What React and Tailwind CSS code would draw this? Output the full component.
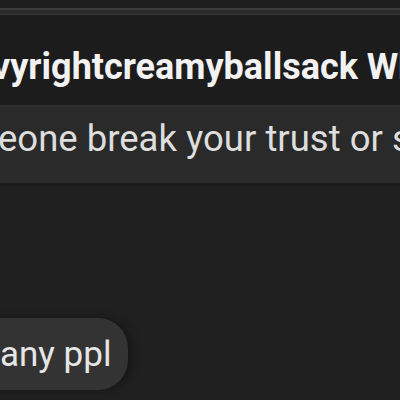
export default function App() {
  return (
    <div className="w-[400px] h-[400px] overflow-hidden bg-[#202020] font-['Roboto',sans-serif] flex flex-col">
      <div className="h-[8px] bg-[#1e1e1e]" />
      <div className="h-[2px] bg-[#3c3c3c]" />
      <div className="h-[4px] bg-[#2a2a2a]" />
      <div className="h-[1px] bg-[#363636]" />
      <div className="h-[90px] bg-[#1c1c1c] pt-[34px] whitespace-nowrap">
        <div className="ml-[-8px] text-[36px] font-bold text-[#f2f2f2] leading-none">
          vyrightcreamyballsack What
        </div>
      </div>
      <div className="h-[78px] bg-[#2a2a2a] border-t-[2px] border-[#303030] pt-[14px] whitespace-nowrap">
        <div className="ml-[-2px] text-[36.5px] text-[#dedede] leading-none">
          eone break your trust or say
        </div>
      </div>
      <div className="h-[3px] bg-[#1b1b1b]" />
      <div className="flex-1 flex flex-col justify-end pb-[10px]">
        <div className="self-start h-[72px] w-[138px] ml-[-10px] rounded-r-[30px] bg-[#333333] flex items-center whitespace-nowrap shadow-[4px_0_8px_rgba(0,0,0,0.35)]">
          <span className="ml-[10px] text-[35px] text-[#e6e6e6] leading-none">any ppl</span>
        </div>
      </div>
    </div>
  );
}
